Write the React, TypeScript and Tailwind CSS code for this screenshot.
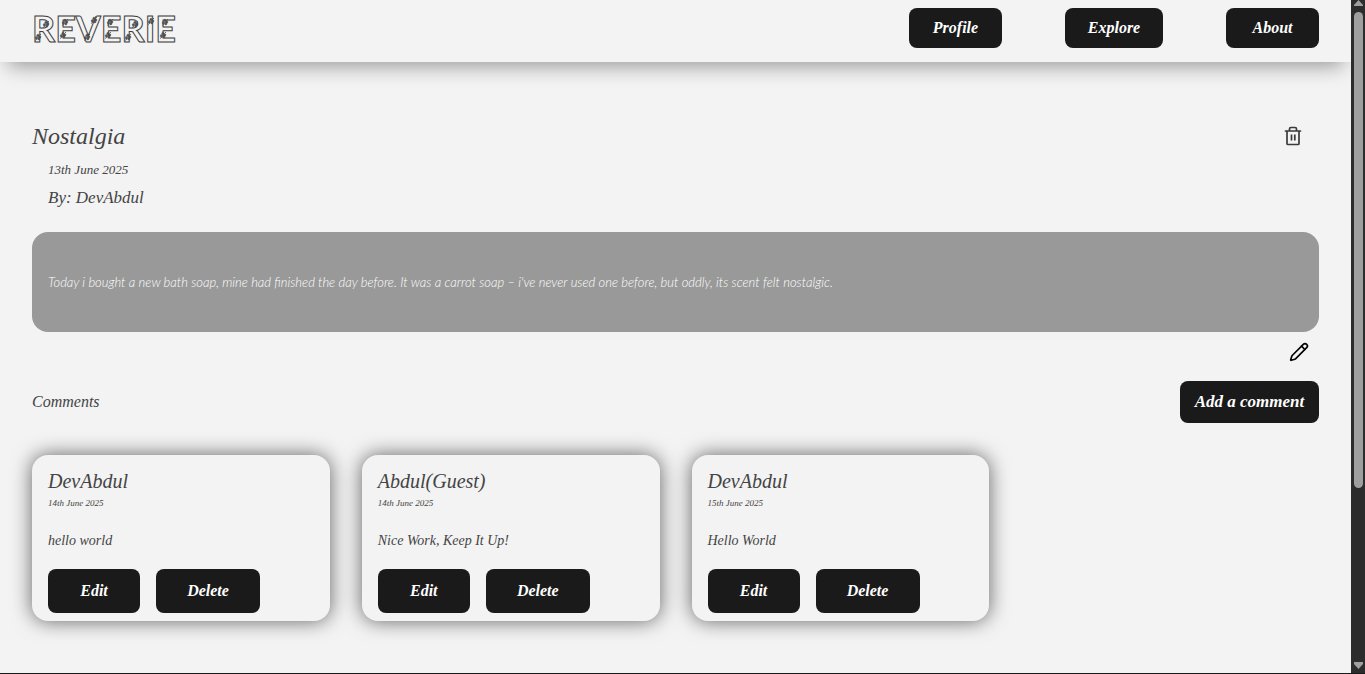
import React from "react";
import { Pencil } from "lucide-react";

type Comment = { id: number; author: string; date: string; text: string };

const comments: Comment[] = [
  { id: 1, author: "DevAbdul", date: "14th June 2025", text: "hello world" },
  { id: 2, author: "Abdul(Guest)", date: "14th June 2025", text: "Nice Work, Keep It Up!" },
  { id: 3, author: "DevAbdul", date: "15th June 2025", text: "Hello World" },
];

const dark = "rounded-lg bg-[#1a1a1a] font-bold text-white";

function Flower({ x, y }: { x: number; y: number }) {
  return (
    <g transform={`translate(${x} ${y})`} fill="#555" stroke="#444" strokeWidth="0.4">
      <circle cx="0" cy="-1.6" r="1.2" />
      <circle cx="1.700" cy="0" r="1.2" />
      <circle cx="0.800" cy="1.700" r="1.2" />
      <circle cx="-1.600" cy="0.800" r="1.2" />
      <path d="M-1 2 L-3 3.500 M1.500 -1.500 L3 -3" fill="none" strokeWidth="0.8" />
    </g>
  );
}

function Logo() {
  return (
    <a
      href="#home"
      className="relative block font-['Lato',sans-serif] text-4xl leading-10 font-bold not-italic text-transparent [-webkit-text-stroke:1px_#3d3d3d]"
    >
      REVERIE
      <svg className="absolute top-0 left-0 h-10 w-[145px]" viewBox="0 0 145 40" aria-hidden="true">
        <Flower x={14} y={16} />
        <Flower x={6} y={29} />
        <Flower x={33} y={14} />
        <Flower x={31} y={27} />
        <Flower x={62} y={12} />
        <Flower x={55} y={29} />
        <Flower x={78} y={14} />
        <Flower x={76} y={27} />
        <Flower x={103} y={16} />
        <Flower x={96} y={29} />
        <Flower x={119} y={13} />
        <Flower x={133} y={14} />
        <Flower x={131} y={27} />
      </svg>
    </a>
  );
}

function TrashIcon() {
  return (
    <svg viewBox="0 0 20 20" className="size-5" fill="none" stroke="#3a3a3a" strokeWidth="1.7" aria-hidden="true">
      <path d="M2.500 5h15M4 5v12.500a1 1 0 0 0 1 1h10a1 1 0 0 0 1-1V5M6.500 5V3a1.500 1.500 0 0 1 1.500-1.500h4A1.500 1.500 0 0 1 13.500 3v2" strokeLinecap="round" />
      <path d="M8.500 8.500v6M11.800 8.500v6" />
    </svg>
  );
}

function CommentCard({ comment }: { comment: Comment }) {
  return (
    <article className="rounded-2xl bg-[#f3f3f3] px-4 pt-3 pb-2 shadow-[0_0_20px_rgba(0,0,0,0.6)]">
      <h3 className="text-xl leading-7">{comment.author}</h3>
      <p className="text-[9px] leading-4">{comment.date}</p>
      <p className="mt-4 text-sm leading-7">{comment.text}</p>
      <div className="mt-[14px] flex gap-4">
        <button type="button" className={`${dark} h-11 w-[92px] text-base`}>Edit</button>
        <button type="button" className={`${dark} h-11 w-[104px] text-base`}>Delete</button>
      </div>
    </article>
  );
}

function ScrollRail() {
  return (
    <div className="flex w-[14px] shrink-0 flex-col items-center bg-[#2c2c2c]" aria-hidden="true">
      <svg viewBox="0 0 9 7" className="h-[7px] w-[9px]" fill="#9f9f9f">
        <path d="M4.500 0 9 5v1H0V5z" />
      </svg>
      <div className="mt-[5px] w-[9px] grow-[476] rounded-full bg-[#9f9f9f]" />
      <div className="grow-[174]" />
      <svg viewBox="0 0 9 7" className="mb-1 h-[7px] w-[9px]" fill="#9f9f9f">
        <path d="M0 0h9v2L4.500 7 0 2z" />
      </svg>
    </div>
  );
}

export default function App() {
  return (
    <div className="flex min-h-screen border-b border-[#1a1a1a] bg-[#f3f3f3] font-['Liberation_Serif',serif] text-[#444] italic">
      <div className="min-w-0 flex-1">
        <header className="flex items-center justify-between px-8 pt-2 pb-[14px] shadow-[0_12px_20px_-8px_rgba(0,0,0,0.38)]">
          <Logo />
          <nav className="flex gap-[63px] text-base">
            <button type="button" className={`${dark} h-10 w-[93px]`}>Profile</button>
            <button type="button" className={`${dark} h-10 w-[98px]`}>Explore</button>
            <button type="button" className={`${dark} h-10 w-[93px]`}>About</button>
          </nav>
        </header>

        <main className="px-8 pt-[54px] pb-[52px]">
          <div className="flex items-center justify-between">
            <h1 className="text-2xl leading-10">Nostalgia</h1>
            <button type="button" aria-label="Delete entry" className="mr-4">
              <TrashIcon />
            </button>
          </div>
          <div className="px-4">
            <p className="text-[13px] leading-7">13th June 2025</p>
            <p className="text-[17px] leading-7">By: DevAbdul</p>
          </div>

          <section className="mt-5 rounded-2xl bg-[#999] px-4 py-[38px] font-['Lato',sans-serif] text-[13px] leading-6 font-light text-white">
            <p>
              Today i bought a new bath soap, mine had finished the day before. It was a carrot soap – i've never used
              one before, but oddly, its scent felt nostalgic.
            </p>
          </section>
          <div className="flex justify-end pt-[10px] pr-[10px]">
            <button type="button" aria-label="Edit entry" className="text-black">
              <Pencil className="size-5" />
            </button>
          </div>

          <div className="mt-[19px] flex items-center justify-between">
            <h2 className="text-base">Comments</h2>
            <button type="button" className={`${dark} h-[42px] w-[139px] text-[17px]`}>Add a comment</button>
          </div>

          <section className="mt-8 grid grid-cols-4 gap-8">
            {comments.map((c) => (
              <CommentCard key={c.id} comment={c} />
            ))}
          </section>
        </main>
      </div>
      <ScrollRail />
    </div>
  );
}
